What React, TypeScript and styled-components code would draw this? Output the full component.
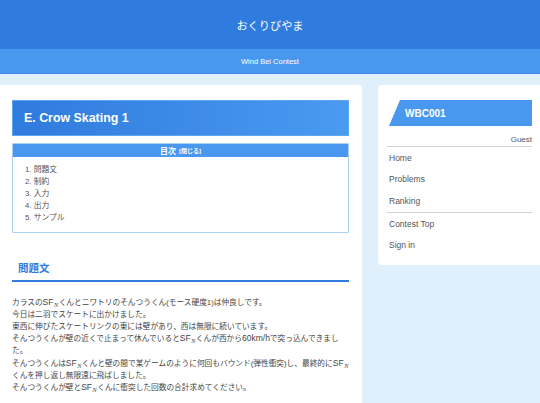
import React from 'react';
import styled, { createGlobalStyle } from 'styled-components';

const GlobalStyle = createGlobalStyle`
  html, body {
    margin: 0;
    padding: 0;
    background: #dfeffc;
    font-family: "Liberation Sans", "Noto Sans CJK JP", sans-serif;
    overflow: hidden;
  }
`;

const Page = styled.div`
  width: 540px;
  height: 403px;
  overflow: hidden;
  background: #dfeffc;
`;

const TopBar = styled.header`
  height: 49px;
  display: flex;
  align-items: center;
  justify-content: center;
  background: #2f7bde;
  color: #fff;
  font-size: 11.2px;
`;

const SubBar = styled.div`
  height: 24px;
  display: flex;
  align-items: center;
  justify-content: center;
  background: #4998ef;
  border-bottom: 1.5px solid #3c8ae8;
  color: #fff;
  font-size: 7.5px;
`;

const Body = styled.div`
  display: grid;
  grid-template-columns: 362px 162px;
  gap: 16px;
  padding-top: 10.5px;
  align-items: start;
`;

const MainCard = styled.main`
  background: #fff;
  border-radius: 0 3px 0 0;
  padding: 15px 13px 40px 12px;
  min-height: 400px;
`;

const TitleBox = styled.div`
  height: 36px;
  box-sizing: border-box;
  display: flex;
  align-items: center;
  padding-left: 11px;
  background: linear-gradient(90deg, #2f7bde 0%, #4a9af0 100%);
  border: 1px solid #5ea6f2;
  color: #fff;
  font-size: 12.4px;
  font-weight: bold;
`;

const Toc = styled.div`
  margin-top: 7.5px;
  border: 1px solid #a9cff5;
  border-radius: 1px;
`;

const TocHead = styled.div`
  height: 13px;
  display: flex;
  align-items: center;
  justify-content: center;
  gap: 3px;
  background: #4998ef;
  color: #fff;
  font-size: 8px;
  font-weight: bold;
`;

const TocToggle = styled.span`
  font-size: 6px;
`;

const TocList = styled.ol`
  margin: 0;
  padding: 7px 0 7.5px 12px;
  list-style: none;
`;

const TocItem = styled.li`
  line-height: 12px;
  font-size: 7.8px;
  color: #555;
`;

const SectionTitle = styled.h2`
  margin: 28.5px 0 0;
  padding: 0 0 5px 6px;
  line-height: 14px;
  font-size: 10.5px;
  font-weight: bold;
  color: #2f7bde;
  border-bottom: 2px solid #2f7bde;
`;

const Paragraph = styled.p`
  margin: 14.5px 0 0;
  font-size: 7.7px;
  line-height: 12.2px;
  color: #444;
`;

const Latin = styled.span`
  font-size: 8.5px;
  line-height: 0;
`;

const Symbol = styled.span`
  white-space: nowrap;
`;

const Sub = styled.span`
  position: relative;
  top: 2px;
  line-height: 0;
  margin: 0 0.5px;
  font-family: "Liberation Serif", serif;
  font-style: italic;
  font-size: 6.2px;
`;

const SideCard = styled.aside`
  background: #fff;
  border-radius: 3px 0 0 3px;
  padding: 15.5px 8px 8.5px 9px;
`;

const ContestTag = styled.div`
  margin-left: 2px;
  height: 26px;
  display: flex;
  align-items: center;
  padding-left: 16px;
  background: #4998ef;
  clip-path: polygon(11px 0, 100% 0, 100% 100%, 0 100%);
  color: #fff;
  font-size: 10px;
  font-weight: bold;
`;

const UserRow = styled.div`
  padding-top: 7.5px;
  line-height: 12px;
  text-align: right;
  font-size: 8px;
  color: #555;
`;

const Divider = styled.div`
  height: 1.5px;
  background: #d2d2d2;
`;

const NavItem = styled.div`
  height: 21.5px;
  display: flex;
  align-items: center;
  padding-left: 2px;
  font-size: 8.5px;
  color: #555;
`;

const SF = () => (
  <Symbol>
    <Latin>SF</Latin>
    <Sub>N</Sub>
  </Symbol>
);

const tocItems = ['1. 問題文', '2. 制約', '3. 入力', '4. 出力', '5. サンプル'];

export default function App() {
  return (
    <Page>
      <GlobalStyle />
      <TopBar>おくりびやま</TopBar>
      <SubBar>Wind Bel Contest</SubBar>
      <Body>
        <MainCard>
          <TitleBox>E. Crow Skating 1</TitleBox>
          <Toc>
            <TocHead>
              目次 <TocToggle>[閉じる]</TocToggle>
            </TocHead>
            <TocList>
              {tocItems.map(item => (
                <TocItem key={item}>{item}</TocItem>
              ))}
            </TocList>
          </Toc>
          <SectionTitle>問題文</SectionTitle>
          <Paragraph>
            カラスの<SF />くんとニワトリのそんつうくん(モース硬度1)は仲良しです。
            <br />
            今日は二羽でスケートに出かけました。
            <br />
            東西に伸びたスケートリンクの東には壁があり、西は無限に続いています。
            <br />
            そんつうくんが壁の近くで止まって休んでいると<SF />くんが西から<Latin>60km/h</Latin>で突っ込んできました。
            <br />
            そんつうくんは<SF />くんと壁の間で某ゲームのように何回もバウンド(弾性衝突)し、最終的に<SF />くんを押し返し無限遠に飛ばしました。
            <br />
            そんつうくんが壁と<SF />くんに衝突した回数の合計求めてください。
          </Paragraph>
        </MainCard>
        <SideCard>
          <ContestTag>WBC001</ContestTag>
          <UserRow>Guest</UserRow>
          <Divider />
          <NavItem>Home</NavItem>
          <NavItem>Problems</NavItem>
          <NavItem>Ranking</NavItem>
          <Divider />
          <NavItem>Contest Top</NavItem>
          <NavItem>Sign in</NavItem>
        </SideCard>
      </Body>
    </Page>
  );
}
